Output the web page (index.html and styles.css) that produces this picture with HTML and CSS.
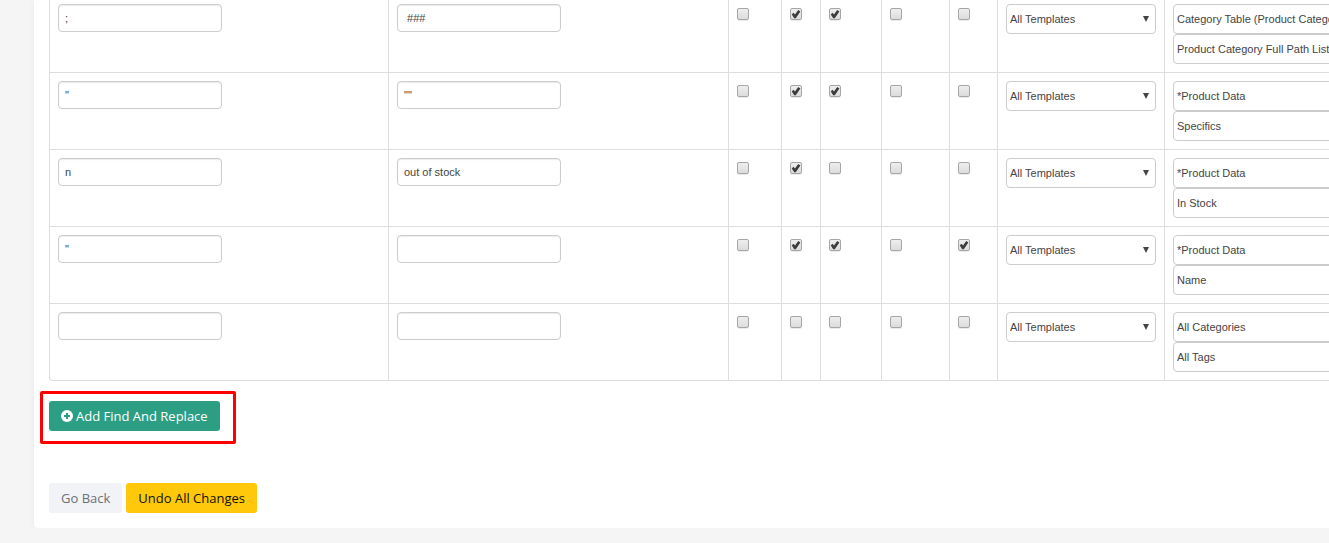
FILE: index.html
```html
<!DOCTYPE html>
<html lang="en">

<head>
    <meta charset="UTF-8">
    <meta name="viewport" content="width=device-width, initial-scale=1.0">
    <title>Find And Replace</title>
    <link rel="stylesheet" href="styles.css">
</head>

<body>
    <main class="card">
        <form>
            <table class="rules">
                <colgroup>
                    <col class="col-text">
                    <col class="col-text">
                    <col class="col-flag-a">
                    <col class="col-flag-b">
                    <col class="col-flag-c">
                    <col class="col-flag-d">
                    <col class="col-flag-e">
                    <col class="col-template">
                    <col>
                </colgroup>
                <tbody>
                    <tr>
                        <td><input type="text" class="field" aria-label="Find" value=";"></td>
                        <td><input type="text" class="field" aria-label="Replace" value=" ###"></td>
                        <td><input type="checkbox" aria-label="Option 1"></td>
                        <td><input type="checkbox" aria-label="Option 2" checked></td>
                        <td><input type="checkbox" aria-label="Option 3" checked></td>
                        <td><input type="checkbox" aria-label="Option 4"></td>
                        <td><input type="checkbox" aria-label="Option 5"></td>
                        <td><div class="drop"><select aria-label="Template"><option>All Templates</option></select></div></td>
                        <td>
                            <div class="drop wide"><select aria-label="Table"><option>Category Table (Product Category)</option></select></div>
                            <div class="drop wide"><select aria-label="Column"><option>Product Category Full Path List</option></select></div>
                        </td>
                    </tr>
                    <tr>
                        <td><input type="text" class="field" aria-label="Find" value="&quot;"></td>
                        <td><input type="text" class="field" aria-label="Replace" value="&quot;&quot;"></td>
                        <td><input type="checkbox" aria-label="Option 1"></td>
                        <td><input type="checkbox" aria-label="Option 2" checked></td>
                        <td><input type="checkbox" aria-label="Option 3" checked></td>
                        <td><input type="checkbox" aria-label="Option 4"></td>
                        <td><input type="checkbox" aria-label="Option 5"></td>
                        <td><div class="drop"><select aria-label="Template"><option>All Templates</option></select></div></td>
                        <td>
                            <div class="drop wide"><select aria-label="Table"><option>*Product Data</option></select></div>
                            <div class="drop wide"><select aria-label="Column"><option>Specifics</option></select></div>
                        </td>
                    </tr>
                    <tr>
                        <td><input type="text" class="field" aria-label="Find" value="n"></td>
                        <td><input type="text" class="field" aria-label="Replace" value="out of stock"></td>
                        <td><input type="checkbox" aria-label="Option 1"></td>
                        <td><input type="checkbox" aria-label="Option 2" checked></td>
                        <td><input type="checkbox" aria-label="Option 3"></td>
                        <td><input type="checkbox" aria-label="Option 4"></td>
                        <td><input type="checkbox" aria-label="Option 5"></td>
                        <td><div class="drop"><select aria-label="Template"><option>All Templates</option></select></div></td>
                        <td>
                            <div class="drop wide"><select aria-label="Table"><option>*Product Data</option></select></div>
                            <div class="drop wide"><select aria-label="Column"><option>In Stock</option></select></div>
                        </td>
                    </tr>
                    <tr>
                        <td><input type="text" class="field" aria-label="Find" value="&quot;"></td>
                        <td><input type="text" class="field" aria-label="Replace" value=""></td>
                        <td><input type="checkbox" aria-label="Option 1"></td>
                        <td><input type="checkbox" aria-label="Option 2" checked></td>
                        <td><input type="checkbox" aria-label="Option 3" checked></td>
                        <td><input type="checkbox" aria-label="Option 4"></td>
                        <td><input type="checkbox" aria-label="Option 5" checked></td>
                        <td><div class="drop"><select aria-label="Template"><option>All Templates</option></select></div></td>
                        <td>
                            <div class="drop wide"><select aria-label="Table"><option>*Product Data</option></select></div>
                            <div class="drop wide"><select aria-label="Column"><option>Name</option></select></div>
                        </td>
                    </tr>
                    <tr>
                        <td><input type="text" class="field" aria-label="Find" value=""></td>
                        <td><input type="text" class="field" aria-label="Replace" value=""></td>
                        <td><input type="checkbox" aria-label="Option 1"></td>
                        <td><input type="checkbox" aria-label="Option 2"></td>
                        <td><input type="checkbox" aria-label="Option 3"></td>
                        <td><input type="checkbox" aria-label="Option 4"></td>
                        <td><input type="checkbox" aria-label="Option 5"></td>
                        <td><div class="drop"><select aria-label="Template"><option>All Templates</option></select></div></td>
                        <td>
                            <div class="drop wide"><select aria-label="Table"><option>All Categories</option></select></div>
                            <div class="drop wide"><select aria-label="Column"><option>All Tags</option></select></div>
                        </td>
                    </tr>
                </tbody>
            </table>

            <div class="add-row">
                <button type="button" class="btn btn-add">
                    <svg class="icon" viewBox="0 0 12 12" aria-hidden="true">
                        <circle cx="6" cy="6" r="6" fill="#fff" />
                        <path d="M6 3v6M3 6h6" stroke="#2b9e83" stroke-width="2" />
                    </svg>
                    Add Find And Replace
                </button>
                <div class="highlight"></div>
            </div>

            <div class="actions">
                <button type="button" class="btn btn-back">Go Back</button>
                <button type="button" class="btn btn-undo">Undo All Changes</button>
            </div>
        </form>
    </main>
</body>

</html>
```
FILE: styles.css
```css
* {
    box-sizing: border-box;
}

body {
    margin: 0;
    background-color: #f5f5f5;
    font-family: "Liberation Sans", Arial, sans-serif;
    font-size: 11px;
    color: #444;
}

.card {
    margin-left: 34px;
    padding: 0 0 15px 15px;
    background: #fff;
    border-radius: 0 0 0 4px;
    box-shadow: 0 1px 6px rgba(0, 0, 0, 0.06);
    overflow: hidden;
}

/* rules table */
.rules {
    width: 100%;
    table-layout: fixed;
    border-collapse: separate;
    border-spacing: 0;
}

.col-text {
    width: 340px;
}

.col-flag-a {
    width: 53px;
}

.col-flag-b {
    width: 39px;
}

.col-flag-c {
    width: 61px;
}

.col-flag-d {
    width: 68px;
}

.col-flag-e {
    width: 48px;
}

.col-template {
    width: 167px;
}

.rules td {
    padding: 8px;
    vertical-align: top;
    border-right: 1px solid #ddd;
    border-bottom: 1px solid #ddd;
}

.rules tr:first-child td {
    padding-top: 4px;
}

.rules td:first-child {
    border-left: 1px solid #ddd;
}

.rules td:last-child {
    border-right: none;
}

.rules tr:last-child td:first-child {
    border-bottom-left-radius: 4px;
}

.field {
    display: block;
    width: 164px;
    height: 28px;
    padding: 0 6px;
    border: 1px solid #ccc;
    border-radius: 4px;
    box-shadow: inset 0 1px 1px rgba(0, 0, 0, 0.08);
    background: #fff;
    font: inherit;
    color: inherit;
}

input[type="checkbox"] {
    appearance: none;
    display: block;
    width: 12px;
    height: 12px;
    margin: 4px 0 0;
    border: 1px solid #a6a6a6;
    border-radius: 2px;
    background: linear-gradient(#eee, #dcdcdc);
    box-shadow: 0 1px 0 rgba(0, 0, 0, 0.08);
}

input[type="checkbox"]:checked::before {
    content: "";
    display: block;
    width: 10px;
    height: 10px;
    background: #3c3c3c;
    clip-path: polygon(8% 54%, 24% 38%, 40% 54%, 72% 10%, 94% 24%, 48% 92%, 32% 92%);
}

.drop {
    position: relative;
    width: 150px;
}

.drop.wide {
    width: 220px;
}

.drop select {
    appearance: none;
    display: block;
    width: 100%;
    height: 30px;
    padding: 0 20px 0 3px;
    border: 1px solid #ccc;
    border-radius: 4px;
    background: #fff;
    font: inherit;
    color: inherit;
}

.drop::after {
    content: "";
    position: absolute;
    top: 12px;
    right: 7px;
    width: 6px;
    height: 6px;
    background: #444;
    clip-path: polygon(0 0, 100% 0, 50% 100%);
    pointer-events: none;
}

/* buttons */
.btn {
    display: inline-flex;
    align-items: center;
    justify-content: center;
    height: 30px;
    padding: 0 12px;
    border: none;
    border-radius: 3px;
    font-family: "Open Sans", "Noto Sans", sans-serif;
    font-size: 13px;
    cursor: pointer;
}

.add-row {
    position: relative;
    display: flex;
    margin-top: 20px;
}

.btn-add {
    gap: 3px;
    background-color: #2b9e83;
    color: #fff;
}

.icon {
    width: 12px;
    height: 12px;
}

.highlight {
    position: absolute;
    top: -10px;
    left: -9px;
    width: 196px;
    height: 53px;
    border: 3px solid #f00;
    border-radius: 2px;
    pointer-events: none;
}

.actions {
    display: flex;
    gap: 4px;
    margin-top: 52px;
}

.btn-back {
    background-color: #f1f3f6;
    color: #6b7076;
}

.btn-undo {
    background-color: #ffc80a;
    color: #111;
}
```
